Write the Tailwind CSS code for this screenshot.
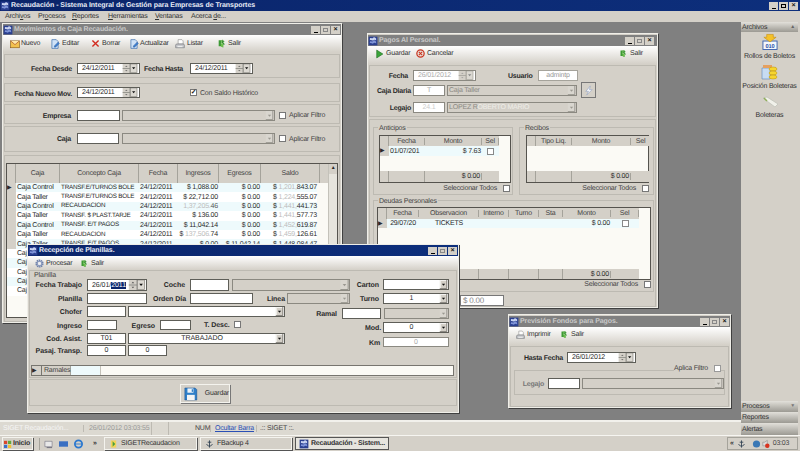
<!DOCTYPE html>
<html lang="es">
<head>
<meta charset="utf-8">
<title>Recaudación</title>
<script src="https://cdn.jsdelivr.net/npm/@tailwindcss/browser@4"></script>
</head>
<body class="w-[800px] h-[451px] overflow-hidden flex flex-col bg-[#d4d0c8] font-['Liberation_Sans',sans-serif] text-[7px] tracking-[-0.2px] leading-none text-[#2a2a2a] [text-rendering:geometricPrecision]">

<svg class="absolute w-0 h-0">
  <symbol id="dt" viewBox="0 0 18 11"><rect width="18" height="11" fill="#d4d0c8"/><path d="M0 5.500h9M9 0v11" stroke="#8a8a84" fill="none"/><path d="M3 3.500l1.500-1.500 1.500 1.500zM3 7.500l1.500 1.500 1.500-1.500z" fill="#555"/><rect x="9.500" y="0" width="8" height="10.500" fill="#dcd9d2" stroke="#77756f" stroke-width=".6"/><path d="M11.500 4h4l-2 2.500z" fill="#111"/></symbol>
  <symbol id="dt-off" viewBox="0 0 18 11"><rect width="18" height="11" fill="#d4d0c8"/><path d="M0 5.500h9M9 0v11" stroke="#a5a39d" fill="none"/><path d="M3 3.500l1.500-1.500 1.500 1.500zM3 7.500l1.500 1.500 1.500-1.500z" fill="#999"/><rect x="9.500" y="0" width="8" height="10.500" fill="#dcd9d2" stroke="#99978f" stroke-width=".6"/><path d="M11.500 4h4l-2 2.500z" fill="#888"/></symbol>
  <symbol id="dd" viewBox="0 0 9 11"><rect width="9" height="11" fill="#d4d0c8"/><path d="M.5 10.500V.5h8" stroke="#fff" fill="none"/><path d="M0 10.500h8.500V0" stroke="#77756f" fill="none"/><path d="M2.500 4.500h4l-2 2.500z" fill="#111"/></symbol>
  <symbol id="dd-off" viewBox="0 0 9 11"><rect width="9" height="11" fill="#d9d6cf"/><path d="M0 10.500h8.500V0" stroke="#8f8d86" fill="none"/><path d="M2.500 4.500h4l-2 2.500z" fill="#9a9890"/></symbol>
  <symbol id="salir" viewBox="0 0 16 16"><path d="M3 2h8v13l-4-2H3z" fill="#3d9a35"/><path d="M7 2h4v13l-4-2z" fill="#6cc04a"/><path d="M9 1l5 4-3 .5 3 4-2 1.500-3-4-1.500 2z" fill="#2f8a2b" stroke="#e8f5df" stroke-width=".5"/></symbol>
  <symbol id="nuevo" viewBox="0 0 16 16"><rect x="1" y="3" width="14" height="11" fill="#f2c14e" stroke="#8a5a12"/><path d="M1 3l7 6 7-6" fill="#ffe9a8" stroke="#a33a12"/></symbol>
  <symbol id="editar" viewBox="0 0 16 16"><path d="M3 1h7l3 3v11H3z" fill="#cfe2f7" stroke="#2c62a8"/><path d="M7 11l6-6 2 2-6 6H7z" fill="#3f7fd0" stroke="#1d4a8a" stroke-width=".6"/></symbol>
  <symbol id="borrar" viewBox="0 0 16 16"><path d="M2.500 2.500l11 11M13.500 2.500l-11 11" stroke="#d22a1e" stroke-width="2.400" fill="none"/></symbol>
  <symbol id="listar" viewBox="0 0 16 16"><path d="M5 1h6l2 2v5H5z" fill="#fff" stroke="#8c8c8c"/><path d="M2 8h12l1 2v4H1v-4z" fill="#c2c4c8" stroke="#77797d"/><rect x="4" y="11" width="8" height="2" fill="#eee"/></symbol>
  <symbol id="play" viewBox="0 0 16 16"><path d="M3 1l11 7-11 7z" fill="#3aa33a" stroke="#1d6c1d"/></symbol>
  <symbol id="cancel" viewBox="0 0 16 16"><circle cx="8" cy="8" r="6.500" fill="#e8e2dc" stroke="#c9341f" stroke-width="2.200"/><path d="M5 5l6 6M11 5l-6 6" stroke="#c9341f" stroke-width="1.800"/></symbol>
  <symbol id="gear" viewBox="0 0 16 16"><circle cx="8" cy="8" r="5.500" fill="none" stroke="#6d7fa8" stroke-width="3.500" stroke-dasharray="2.400 1"/><circle cx="8" cy="8" r="4" fill="none" stroke="#8b9bc0" stroke-width="2"/><circle cx="8" cy="8" r="2.400" fill="#eef0f6"/></symbol>
  <symbol id="disk" viewBox="0 0 16 16"><path d="M1 1h12l2 2v12H1z" fill="#2f7fc8" stroke="#1d4e8a" stroke-width=".6"/><rect x="4" y="1.500" width="7" height="5" fill="#eef4fa"/><rect x="3.500" y="9" width="9" height="6" fill="#f4f4f4"/><rect x="9" y="2.500" width="1.500" height="3" fill="#2f7fc8"/></symbol>
  <symbol id="win" viewBox="0 0 16 16"><rect x="1" y="1" width="14" height="14" fill="#2a3f8f"/><path d="M3 4c2-2 4 1 5-1s3-1 5 1v3c-2-2-3-1-5 0S5 5 3 7z" fill="#c9d4f2"/><path d="M3 9c2-2 4 1 5-1s3-1 5 1v3c-2-2-3-1-5 0s-3-2-5 0z" fill="#7f94d8"/></symbol>
</svg>

<!-- app title -->
<div class="h-[11px] flex items-center bg-linear-to-r from-[#0a246a] to-[#0d2f7c] text-[#e8ecf6] shrink-0">
  <svg class="w-[10px] h-[10px] shrink-0"><use href="#win"/></svg>
  <span class="ml-[1px] font-bold whitespace-nowrap tracking-[-0.03px]">Recaudación - Sistema Integral de Gestión para Empresas de Transportes</span>
  <div class="ml-auto mr-[2px] flex gap-[1px] text-[#111]">
    <span class="w-[9px] h-[8px] bg-[#d4d0c8] flex items-end justify-center pb-[1px]"><span class="w-[4px] h-[1px] bg-black"></span></span>
    <span class="w-[9px] h-[8px] bg-[#d4d0c8] flex items-center justify-center"><span class="w-[5px] h-[4px] border border-black"></span></span>
    <span class="w-[9px] h-[8px] bg-[#d4d0c8] flex items-center justify-center font-bold">×</span>
  </div>
</div>
<!-- menu -->
<div class="h-[11px] flex items-center bg-[#d4d0c8] shrink-0 relative text-[#333]">
  <span class="ml-[5px] w-[33px]">Archi<u>v</u>os</span><span class="w-[34px]">Pr<u>o</u>cesos</span><span class="w-[36px]"><u>R</u>eportes</span><span class="w-[47px]"><u>H</u>erramientas</span><span class="w-[36px]"><u>V</u>entanas</span><span>Acerca <u>d</u>e...</span>
</div>

<div class="flex h-[413px] shrink-0">
  <div class="w-[741px] flex flex-col">
    <!-- desktop -->
    <div class="relative h-[398px] bg-[#808080] overflow-hidden">

      <!-- Movimientos de Caja -->
      <section class="absolute left-[2px] top-[1px] w-[340px] h-[300px] bg-[#d4d0c8] border border-[#efeee8] shadow-[1px_1px_0_#404040] flex flex-col">
        <div class="h-[11px] bg-[#808080] flex items-center text-[#c9c9c9] font-bold shrink-0 tracking-[-0.1px]">
          <svg class="w-[10px] h-[10px] mr-[1px] shrink-0"><use href="#win"/></svg>Movimientos de Caja Recaudación.
          <div class="ml-auto mr-[1px] flex gap-[1px] text-[#111]">
            <span class="w-[9px] h-[8px] bg-[#d4d0c8] flex items-end justify-center pb-[1px]"><span class="w-[4px] h-[1px] bg-black"></span></span>
            <span class="w-[9px] h-[8px] bg-[#d4d0c8] flex items-center justify-center"><span class="w-[5px] h-[4px] border border-[#888]"></span></span>
            <span class="w-[9px] h-[8px] bg-[#d4d0c8] flex items-center justify-center font-bold">×</span>
          </div>
        </div>
        <div class="h-[17px] bg-linear-to-b from-white to-[#d4d0c8] flex items-center shrink-0 text-[#333] pl-[7px]">
          <svg class="w-[10px] h-[10px] mr-[1px]"><use href="#nuevo"/></svg><span class="w-[29px]">Nuevo</span>
          <svg class="w-[10px] h-[10px] mr-[2px]"><use href="#editar"/></svg><span class="w-[29px]">Editar</span>
          <svg class="w-[9px] h-[9px] mr-[2px]"><use href="#borrar"/></svg><span class="w-[27px]">Borrar</span>
          <svg class="w-[10px] h-[10px] mr-[1px]"><use href="#editar"/></svg><span class="w-[35px]">Actualizar</span>
          <svg class="w-[10px] h-[10px] mr-[2px]"><use href="#listar"/></svg><span class="w-[30px]">Listar</span>
          <svg class="w-[9px] h-[9px] mr-[2px]"><use href="#salir"/></svg><span>Salir</span>
        </div>
        <div class="mt-[2px] flex-1 flex flex-col px-[1px] min-h-0">
          <div class="h-[24px] shrink-0 border border-[#bdbab2] flex items-start pt-[8px]">
            <label class="w-[67px] text-right font-bold pt-[3px]">Fecha Desde</label>
            <div class="ml-[5px] w-[63px] h-[11px] bg-white border border-[#5e5e58] flex items-center pl-[4px]"><span class="flex-1">24/12/2011</span><svg class="w-[18px] h-full shrink-0" preserveAspectRatio="none"><use href="#dt"/></svg></div>
            <label class="ml-[4px] w-[41px] font-bold pt-[3px] whitespace-nowrap">Fecha Hasta</label>
            <div class="ml-[5px] w-[63px] h-[11px] bg-white border border-[#5e5e58] flex items-center pl-[4px]"><span class="flex-1">24/12/2011</span><svg class="w-[18px] h-full shrink-0" preserveAspectRatio="none"><use href="#dt"/></svg></div>
          </div>
          <div class="mt-[5px] h-[19px] shrink-0 border border-[#bdbab2] flex items-start pt-[3px]">
            <label class="w-[67px] text-right font-bold pt-[4px] whitespace-nowrap">Fecha Nuevo Mov.</label>
            <div class="ml-[5px] w-[63px] h-[11px] bg-white border border-[#5e5e58] flex items-center pl-[4px]"><span class="flex-1">24/12/2011</span><svg class="w-[18px] h-full shrink-0" preserveAspectRatio="none"><use href="#dt"/></svg></div>
            <span class="ml-[50px] w-[7px] h-[7px] bg-white border border-[#777] flex items-center justify-center font-bold mt-[2px]">✓</span>
            <span class="ml-[3px] pt-[3px] text-[#444]">Con Saldo Histórico</span>
          </div>
          <div class="mt-[2px] h-[20px] shrink-0 border border-[#bdbab2] flex items-start pt-[5px]">
            <label class="w-[67px] pr-[1px] text-right font-bold pt-[3px]">Empresa</label>
            <span class="ml-[5px] w-[43px] h-[11px] bg-white border border-[#5e5e58]"></span>
            <div class="ml-[2px] w-[153px] h-[11px] bg-[#d4d0c8] border border-[#8b8981] flex justify-end"><svg class="w-[9px] h-full"  preserveAspectRatio="none"><use href="#dd-off"/></svg></div>
            <span class="ml-[4px] mt-[2px] w-[7px] h-[7px] bg-white border border-[#777]"></span>
            <span class="ml-[3px] pt-[2px] text-[#444]">Aplicar Filtro</span>
          </div>
          <div class="mt-[2px] h-[26px] shrink-0 border border-[#bdbab2] flex items-start pt-[6px]">
            <label class="w-[67px] pr-[1px] text-right font-bold pt-[3px]">Caja</label>
            <span class="ml-[5px] w-[42px] h-[11px] bg-white border border-[#5e5e58]"></span>
            <div class="ml-[3px] w-[153px] h-[11px] bg-[#d4d0c8] border border-[#8b8981] flex justify-end"><svg class="w-[9px] h-full"  preserveAspectRatio="none"><use href="#dd-off"/></svg></div>
            <span class="ml-[4px] mt-[2px] w-[7px] h-[7px] bg-white border border-[#777]"></span>
            <span class="ml-[3px] pt-[3px] text-[#444]">Aplicar Filtro</span>
          </div>
          <!-- grid -->
          <div class="mt-[3px] flex-1 border border-[#bdbab2] px-[1px] pt-[7px] pb-[3px] min-h-0">
            <div class="h-full border border-[#55534e] bg-[#fbfaf5] relative flex flex-col overflow-hidden">
              <div class="h-[19px] shrink-0 grid grid-cols-[9px_44px_79px_39px_41px_42px_59px] bg-[#d4d0c8] text-center items-center text-[#444]">
                <span class="h-full border-r border-[#a5a39b]"></span><span class="h-full flex items-center justify-center border-r border-[#a5a39b]">Caja</span><span class="h-full flex items-center justify-center border-r border-[#a5a39b]">Concepto Caja</span><span class="h-full flex items-center justify-center border-r border-[#a5a39b]">Fecha</span><span class="h-full flex items-center justify-center border-r border-[#a5a39b]">Ingresos</span><span class="h-full flex items-center justify-center border-r border-[#a5a39b]">Egresos</span><span class="h-full flex items-center justify-center border-r border-[#a5a39b]">Saldo</span>
              </div>
              <div class="h-[9.400px] shrink-0 grid grid-cols-[9px_44px_79px_39px_41px_42px_56px] items-center bg-[#eefafc] w-fit whitespace-nowrap"><span class="h-full bg-[#d4d0c8] text-[6px] flex items-center">▶</span><span class="pl-[1px]">Caja Control</span><span class="pl-[1px] text-[6.300px]">TRANSF.E/TURNOS BOLE</span><span class="pl-[1px]">24/12/2011</span><span class="text-right pr-[1px]">$ 1,088.00</span><span class="text-right pr-[1px]">$ 0.00</span><span class="text-right">$ <span class="text-[#bbb]">1,201,</span>843.07</span></div>
              <div class="h-[9.400px] shrink-0 grid grid-cols-[9px_44px_79px_39px_41px_42px_56px] items-center bg-white w-fit whitespace-nowrap"><span class="h-full bg-[#d4d0c8]"></span><span class="pl-[1px]">Caja Taller</span><span class="pl-[1px] text-[6.300px]">TRANSF.E/TURNOS BOLE</span><span class="pl-[1px]">24/12/2011</span><span class="text-right pr-[1px]">$ 22,712.00</span><span class="text-right pr-[1px]">$ 0.00</span><span class="text-right">$ <span class="text-[#bbb]">1,224,</span>555.07</span></div>
              <div class="h-[9.400px] shrink-0 grid grid-cols-[9px_44px_79px_39px_41px_42px_56px] items-center bg-[#eefafc] w-fit whitespace-nowrap"><span class="h-full bg-[#d4d0c8]"></span><span class="pl-[1px]">Caja Control</span><span class="pl-[1px] text-[6.300px]">RECAUDACION</span><span class="pl-[1px]">24/12/2011</span><span class="text-right pr-[1px] text-[#bbb]">1,37,205.<span class="text-[#555]">46</span></span><span class="text-right pr-[1px]">$ 0.00</span><span class="text-right">$ <span class="text-[#bbb]">1,441,</span>441.73</span></div>
              <div class="h-[9.400px] shrink-0 grid grid-cols-[9px_44px_79px_39px_41px_42px_56px] items-center bg-white w-fit whitespace-nowrap"><span class="h-full bg-[#d4d0c8]"></span><span class="pl-[1px]">Caja Taller</span><span class="pl-[1px] text-[6.300px]">TRANSF. $ PLAST.TARJE</span><span class="pl-[1px]">24/12/2011</span><span class="text-right pr-[1px]">$ 136.00</span><span class="text-right pr-[1px]">$ 0.00</span><span class="text-right">$ <span class="text-[#bbb]">1,441,</span>577.73</span></div>
              <div class="h-[9.400px] shrink-0 grid grid-cols-[9px_44px_79px_39px_41px_42px_56px] items-center bg-[#eefafc] w-fit whitespace-nowrap"><span class="h-full bg-[#d4d0c8]"></span><span class="pl-[1px]">Caja Control</span><span class="pl-[1px] text-[6.300px]">TRANSF. E/T PAGOS</span><span class="pl-[1px]">24/12/2011</span><span class="text-right pr-[1px]">$ 11,042.14</span><span class="text-right pr-[1px]">$ 0.00</span><span class="text-right">$ <span class="text-[#bbb]">1,452,</span>619.87</span></div>
              <div class="h-[9.400px] shrink-0 grid grid-cols-[9px_44px_79px_39px_41px_42px_56px] items-center bg-white w-fit whitespace-nowrap"><span class="h-full bg-[#d4d0c8]"></span><span class="pl-[1px]">Caja Taller</span><span class="pl-[1px] text-[6.300px]">RECAUDACION</span><span class="pl-[1px]">24/12/2011</span><span class="text-right pr-[1px]">$ <span class="text-[#bbb]">137,506.</span>74</span><span class="text-right pr-[1px]">$ 0.00</span><span class="text-right">$ <span class="text-[#bbb]">1,459,</span>126.61</span></div>
              <div class="h-[9.400px] shrink-0 grid grid-cols-[9px_44px_79px_39px_41px_42px_56px] items-center bg-[#eefafc] w-fit whitespace-nowrap"><span class="h-full bg-[#d4d0c8]"></span><span class="pl-[1px]">Caja Taller</span><span class="pl-[1px] text-[6.300px]">TRANSF. E/T PAGOS</span><span class="pl-[1px]">24/12/2011</span><span class="text-right pr-[1px]">$ 0.00</span><span class="text-right pr-[1px]">$ 11,042.14</span><span class="text-right">$ 1,448,084.47</span></div>
              <div class="h-[9.400px] shrink-0 pl-[10px] bg-white flex items-center">Caja Taller</div>
              <div class="h-[9.400px] shrink-0 pl-[10px] bg-[#eefafc] flex items-center">Caja Taller</div>
              <div class="h-[9.400px] shrink-0 pl-[10px] bg-white flex items-center">Caja Taller</div>
              <div class="h-[9.400px] shrink-0 pl-[10px] bg-[#eefafc] flex items-center">Caja Taller</div>
              <div class="h-[9.400px] shrink-0 pl-[10px] bg-white flex items-center">Caja Taller</div>
              <div class="absolute right-0 top-0 bottom-0 w-[9px] bg-[#e6e4dd] border-l border-[#c4c2ba]"><span class="block h-[10px] bg-[#d4d0c8] text-center text-[5px] pt-[2px]">▲</span></div>
            </div>
          </div>
        </div>
      </section>

      <!-- Pagos Al Personal -->
      <section class="absolute left-[367px] top-[11px] w-[291px] h-[275px] bg-[#d4d0c8] border border-[#efeee8] shadow-[1px_1px_0_#404040] flex flex-col">
        <div class="h-[11px] mt-[1px] bg-[#808080] flex items-center text-[#c9c9c9] font-bold shrink-0 tracking-[-0.1px]">
          <svg class="w-[10px] h-[10px] mr-[1px] shrink-0"><use href="#win"/></svg>Pagos Al Personal.
          <div class="ml-auto mr-[3px] flex gap-[1px] text-[#111]">
            <span class="w-[9px] h-[8px] bg-[#d4d0c8] flex items-end justify-center pb-[1px]"><span class="w-[4px] h-[1px] bg-black"></span></span>
            <span class="w-[9px] h-[8px] bg-[#d4d0c8] flex items-center justify-center"><span class="w-[5px] h-[4px] border border-[#888]"></span></span>
            <span class="w-[9px] h-[8px] bg-[#d4d0c8] flex items-center justify-center font-bold">×</span>
          </div>
        </div>
        <div class="h-[18px] pb-[3px] bg-linear-to-b from-white to-[#d4d0c8] flex items-center shrink-0 text-[#333] pl-[7px]">
          <svg class="w-[9px] h-[10px] mr-[2px]"><use href="#play"/></svg><span class="w-[30px]">Guardar</span>
          <svg class="w-[9px] h-[9px] mr-[2px]"><use href="#cancel"/></svg><span>Cancelar</span>
          <svg class="w-[8px] h-[9px] ml-auto mr-[3px]"><use href="#salir"/></svg><span class="mr-[14px]">Salir</span>
        </div>
        <div class="mt-[1px] mx-[1px] h-[52px] shrink-0 border border-[#bdbab2] flex flex-col">
          <div class="flex items-start h-[16px] pt-[4px]">
            <label class="w-[38px] text-right font-bold pt-[3px]">Fecha</label>
            <div class="ml-[5px] w-[63px] h-[11px] bg-white border border-[#8b8981] text-[#aaa] flex items-center pl-[4px]"><span class="flex-1">26/01/2012</span><svg class="w-[18px] h-full shrink-0" preserveAspectRatio="none"><use href="#dt-off"/></svg></div>
            <label class="ml-[32px] font-bold pt-[3px] w-[26px]">Usuario</label>
            <span class="ml-[4px] w-[40px] h-[11px] bg-white border border-[#a5a39b] text-[#999] flex items-center justify-center">admintp</span>
          </div>
          <div class="flex items-start h-[17px] pt-[3px]">
            <label class="w-[41px] text-right font-bold pt-[3px] whitespace-nowrap">Caja Diaria</label>
            <span class="ml-[2px] w-[32px] h-[11px] bg-white border border-[#8b8981] text-[#aaa] flex items-center justify-center">T</span>
            <div class="ml-[2px] w-[130px] h-[11px] bg-[#d4d0c8] border border-[#8b8981] text-[#8c8a84] flex items-center pl-[1px]"><span class="flex-1">Caja Taller</span><svg class="w-[9px] h-full" preserveAspectRatio="none"><use href="#dd-off"/></svg></div>
            <span class="ml-[4px] -mt-[3px] w-[15px] h-[16px] bg-[#d4d0c8] border border-[#777] flex items-center justify-center"><svg viewBox="0 0 12 12" class="w-[11px] h-[11px]"><path d="M8 1L3 7h3l-2 4 6-6H7z" fill="#f4f6fa" stroke="#9aa8c4" stroke-width=".7"/></svg></span>
          </div>
          <div class="flex items-start h-[16px] pt-[3px]">
            <label class="w-[41px] text-right font-bold pt-[3px]">Legajo</label>
            <span class="ml-[2px] w-[32px] h-[11px] bg-white border border-[#8b8981] text-[#ccc] flex items-center justify-center">24.1</span>
            <div class="ml-[2px] w-[130px] h-[11px] bg-[#d4d0c8] border border-[#8b8981] text-[#8c8a84] flex items-center pl-[1px]"><span class="flex-1">LOPEZ R<span class="text-[#efeee8]">OBERTO MARIO</span></span><svg class="w-[9px] h-full" preserveAspectRatio="none"><use href="#dd-off"/></svg></div>
          </div>
        </div>
        <div class="mt-[2px] flex-1 mx-[1px] border border-[#bdbab2] flex flex-col pl-[3px] pr-[1px] min-h-0">
          <div class="mt-[7px] flex gap-[6px] h-[68px] shrink-0">
            <div class="relative w-[140px] border border-[#bdbab2] pt-[7px] pl-[5px] pr-[1px]">
              <span class="absolute -top-[3px] left-[4px] bg-[#d4d0c8] px-[1px] text-[#444]">Anticipos</span>
              <div class="h-[48px] border border-[#55534e] bg-[#fbfaf5] flex flex-col">
                <div class="h-[10px] shrink-0 grid grid-cols-[9px_36px_57px_17px] bg-[#d4d0c8] text-center items-center w-fit text-[#444]"><span class="h-full border-r border-[#a5a39b]"></span><span class="border-r border-[#a5a39b]">Fecha</span><span class="border-r border-[#a5a39b]">Monto</span><span class="border-r border-[#a5a39b]">Sel</span></div>
                <div class="h-[10px] shrink-0 grid grid-cols-[9px_36px_57px_17px] bg-[#eefafc] w-fit items-center"><span class="h-full bg-[#d4d0c8] text-[6px] flex items-center">▶</span><span class="pl-[1px] whitespace-nowrap">01/07/201</span><span class="text-right pr-[1px]">$ 7.63</span><span class="flex justify-center"><span class="w-[7px] h-[7px] bg-white border border-[#888]"></span></span></div>
                <div class="mt-auto h-[11px] grid grid-cols-[9px_36px_57px_17px] bg-[#d4d0c8] w-fit items-center"><span class="h-full border-r border-[#a5a39b]"></span><span class="h-full border-r border-[#a5a39b]"></span><span class="text-right pr-[1px] border-r border-[#a5a39b]">$ 0.00</span><span></span></div>
              </div>
              <div class="mt-[2px] flex justify-end items-center text-[#444]"><span>Seleccionar Todos</span><span class="ml-[6px] mr-[1px] w-[7px] h-[7px] bg-white border border-[#777]"></span></div>
            </div>
            <div class="relative w-[135px] border border-[#bdbab2] pt-[7px] pl-[6px] pr-[4px]">
              <span class="absolute -top-[3px] left-[4px] bg-[#d4d0c8] px-[1px] text-[#444]">Recibos</span>
              <div class="h-[48px] border border-[#55534e] bg-[#fbfaf5] flex flex-col">
                <div class="h-[10px] shrink-0 grid grid-cols-[9px_36px_59px_19px] bg-[#d4d0c8] text-center items-center w-fit text-[#444]"><span class="h-full border-r border-[#a5a39b]"></span><span class="border-r border-[#a5a39b]">Tipo Liq.</span><span class="border-r border-[#a5a39b]">Monto</span><span>Sel</span></div>
                <div class="mt-auto h-[11px] grid grid-cols-[9px_36px_59px_19px] bg-[#d4d0c8] w-fit items-center"><span class="h-full border-r border-[#a5a39b]"></span><span class="h-full border-r border-[#a5a39b]"></span><span class="text-right pr-[1px] border-r border-[#a5a39b]">$ 0.00</span><span></span></div>
              </div>
              <div class="mt-[2px] flex justify-end items-center text-[#444]"><span>Seleccionar Todos</span><span class="ml-[6px] w-[7px] h-[7px] bg-white border border-[#777]"></span></div>
            </div>
          </div>
          <div class="mt-[5px] relative h-[92px] shrink-0 border border-[#bdbab2] pt-[6px] pl-[3px] pr-[2px]">
            <span class="absolute -top-[3px] left-[4px] bg-[#d4d0c8] px-[1px] text-[#444]">Deudas Personales</span>
            <div class="h-[73px] border border-[#55534e] bg-[#fbfaf5] flex flex-col">
              <div class="h-[11px] shrink-0 grid grid-cols-[9px_32px_60px_30px_30px_24px_48px_28px] bg-[#d4d0c8] text-center items-center w-fit text-[#444]"><span class="h-full border-r border-[#a5a39b]"></span><span class="border-r border-[#a5a39b]">Fecha</span><span class="border-r border-[#a5a39b]">Observacion</span><span class="border-r border-[#a5a39b]">Interno</span><span class="border-r border-[#a5a39b]">Turno</span><span class="border-r border-[#a5a39b]">Sta</span><span class="border-r border-[#a5a39b]">Monto</span><span class="border-r border-[#a5a39b]">Sel</span></div>
              <div class="h-[9px] shrink-0 grid grid-cols-[9px_32px_60px_30px_30px_24px_48px_28px] bg-[#eefafc] items-center w-fit text-center"><span class="h-full bg-[#d4d0c8] text-[6px] flex items-center">▶</span><span>29/07/20</span><span>TICKETS</span><span></span><span></span><span></span><span class="text-right pr-[1px]">$ 0.00</span><span class="flex justify-center"><span class="w-[7px] h-[7px] bg-white border border-[#888]"></span></span></div>
              <div class="mt-auto h-[10px] grid grid-cols-[9px_32px_60px_30px_30px_24px_48px_28px] bg-[#d4d0c8] items-center w-fit"><span class="h-full border-r border-[#a5a39b]"></span><span class="h-full border-r border-[#a5a39b]"></span><span class="h-full border-r border-[#a5a39b]"></span><span class="h-full border-r border-[#a5a39b]"></span><span class="h-full border-r border-[#a5a39b]"></span><span class="h-full border-r border-[#a5a39b]"></span><span class="text-right pr-[1px] border-r border-[#a5a39b]">$ 0.00</span><span></span></div>
            </div>
            <div class="mt-[1px] flex justify-end items-center text-[#444]"><span>Seleccionar Todos</span><span class="ml-[6px] w-[7px] h-[7px] bg-white border border-[#777]"></span></div>
          </div>
          <span class="mt-[3px] ml-[87px] w-[44px] h-[11px] bg-white border border-[#777] flex items-center pl-[2px] text-[#888] text-[8px] shrink-0">$ 0.00</span>
        </div>
      </section>

      <!-- Prevision Fondos -->
      <section class="absolute left-[508px] top-[292px] w-[223px] h-[94px] bg-[#d4d0c8] border border-[#efeee8] shadow-[1px_1px_0_#404040] flex flex-col">
        <div class="h-[11px] mt-[1px] bg-[#808080] flex items-center text-[#c9c9c9] font-bold shrink-0 tracking-[-0.1px]">
          <svg class="w-[10px] h-[10px] mr-[1px] shrink-0"><use href="#win"/></svg>Previsión Fondos para Pagos.
          <div class="ml-auto mr-[1px] flex gap-[1px] text-[#111]">
            <span class="w-[9px] h-[8px] bg-[#d4d0c8] flex items-end justify-center pb-[1px]"><span class="w-[4px] h-[1px] bg-black"></span></span>
            <span class="w-[9px] h-[8px] bg-[#d4d0c8] flex items-center justify-center"><span class="w-[5px] h-[4px] border border-[#888]"></span></span>
            <span class="w-[9px] h-[8px] bg-[#d4d0c8] flex items-center justify-center font-bold">×</span>
          </div>
        </div>
        <div class="h-[18px] pb-[3px] bg-linear-to-b from-white to-[#d4d0c8] flex items-center shrink-0 text-[#333] pl-[7px]">
          <svg class="w-[9px] h-[10px] mr-[2px]"><use href="#listar"/></svg><span class="w-[33px]">Imprimir</span>
          <svg class="w-[8px] h-[9px] mr-[3px]"><use href="#salir"/></svg><span>Salir</span>
        </div>
        <div class="mt-[1px] mx-[1px] flex-1 border border-[#bdbab2] flex flex-col">
          <div class="mt-[5px] flex items-start">
            <label class="w-[52px] text-right font-bold pt-[3px] whitespace-nowrap">Hasta Fecha</label>
            <div class="ml-[4px] w-[69px] h-[11px] bg-white border border-[#5e5e58] flex items-center pl-[4px]"><span class="flex-1">26/01/2012</span><svg class="w-[18px] h-full shrink-0" preserveAspectRatio="none"><use href="#dt"/></svg></div>
          </div>
          <div class="relative mt-[7px] mx-[3px] h-[25px] border border-[#bdbab2] flex items-start pt-[7px]">
            <div class="absolute -top-[6px] right-[3px] bg-[#d4d0c8] flex items-center text-[#444]"><span>Aplica Filtro</span><span class="ml-[6px] w-[7px] h-[7px] bg-white border border-[#999]"></span></div>
            <label class="w-[29px] text-right font-bold text-[#777] pt-[3px]">Legajo</label>
            <span class="ml-[4px] w-[32px] h-[11px] bg-white border border-[#5e5e58]"></span>
            <div class="ml-[2px] w-[142px] h-[11px] bg-[#d4d0c8] border border-[#8b8981] flex justify-end"><svg class="w-[9px] h-full" preserveAspectRatio="none"><use href="#dd-off"/></svg></div>
          </div>
        </div>
      </section>

      <!-- Recepcion de Planillas -->
      <section class="absolute left-[27px] top-[222px] w-[432px] h-[169px] bg-[#d4d0c8] border border-[#efeee8] shadow-[1px_1px_0_#404040] flex flex-col">
        <div class="h-[11px] bg-linear-to-r from-[#0a246a] to-[#0d2f7c] flex items-center text-[#e8ecf6] font-bold shrink-0 tracking-[-0.1px]">
          <svg class="w-[10px] h-[10px] mr-[1px] shrink-0"><use href="#win"/></svg>Recepción de Planillas.
          <div class="ml-auto mr-[1px] flex gap-[1px] text-[#111]">
            <span class="w-[9px] h-[8px] bg-[#d4d0c8] flex items-end justify-center pb-[1px]"><span class="w-[4px] h-[1px] bg-black"></span></span>
            <span class="w-[9px] h-[8px] bg-[#d4d0c8] flex items-center justify-center"><span class="w-[5px] h-[4px] border border-[#888]"></span></span>
            <span class="w-[9px] h-[8px] bg-[#d4d0c8] flex items-center justify-center font-bold">×</span>
          </div>
        </div>
        <div class="h-[14px] bg-linear-to-b from-white to-[#d4d0c8] flex items-center shrink-0 text-[#333] pl-[7px]">
          <svg class="w-[9px] h-[9px] mr-[2px]"><use href="#gear"/></svg><span class="w-[34px]">Procesar</span>
          <svg class="w-[8px] h-[9px] mr-[3px]"><use href="#salir"/></svg><span>Salir</span>
        </div>
        <div class="h-[108px] mx-[1px] shrink-0 border border-[#bdbab2] flex flex-col relative tracking-[-0.05px]">
          <span class="absolute top-[1px] left-[4px] text-[#444]">Planilla</span>
          <div class="mt-[8px] h-[14px] flex items-start shrink-0">
            <label class="w-[52px] text-right font-bold pt-[3px] whitespace-nowrap">Fecha Trabajo</label>
            <div class="ml-[5px] w-[60px] h-[12px] bg-white border border-[#5e5e58] flex items-center pl-[4px]"><span class="flex-1">26/01/<span class="bg-[#0a246a] text-white">2011</span></span><svg class="w-[18px] h-full shrink-0" preserveAspectRatio="none"><use href="#dt"/></svg></div>
            <label class="w-[38px] text-right font-bold pt-[3px]">Coche</label>
            <span class="ml-[5px] w-[39px] h-[12px] bg-white border border-[#5e5e58]"></span>
            <div class="ml-[3px] w-[118px] h-[12px] bg-[#d4d0c8] border border-[#8b8981] flex justify-end"><svg class="w-[9px] h-full" preserveAspectRatio="none"><use href="#dd-off"/></svg></div>
            <label class="w-[29px] text-right font-bold pt-[3px]">Carton</label>
            <div class="ml-[4px] w-[66px] h-[11px] bg-white border border-[#5e5e58] flex justify-end"><svg class="w-[9px] h-full" preserveAspectRatio="none"><use href="#dd"/></svg></div>
          </div>
          <div class="h-[13px] flex items-start shrink-0">
            <label class="w-[52px] text-right font-bold pt-[3px]">Planilla</label>
            <span class="ml-[5px] w-[60px] h-[11px] bg-white border border-[#5e5e58]"></span>
            <label class="w-[39px] text-right font-bold pt-[3px] whitespace-nowrap">Orden Día</label>
            <span class="ml-[4px] w-[63px] h-[11px] bg-white border border-[#5e5e58]"></span>
            <label class="w-[32px] text-right font-bold pt-[3px]">Linea</label>
            <div class="ml-[2px] w-[63px] h-[11px] bg-[#d4d0c8] border border-[#8b8981] flex justify-end"><svg class="w-[9px] h-full" preserveAspectRatio="none"><use href="#dd-off"/></svg></div>
            <label class="w-[29px] text-right font-bold pt-[3px]">Turno</label>
            <div class="ml-[4px] w-[66px] h-[11px] bg-white border border-[#5e5e58] flex items-center"><span class="flex-1 text-center">1</span><svg class="w-[9px] h-full" preserveAspectRatio="none"><use href="#dd"/></svg></div>
          </div>
          <div class="h-[14px] flex items-start shrink-0">
            <label class="w-[52px] text-right font-bold pt-[3px]">Chofer</label>
            <span class="ml-[5px] w-[39px] h-[11px] bg-white border border-[#5e5e58]"></span>
            <div class="ml-[2px] w-[157px] h-[11px] bg-white border border-[#5e5e58] flex justify-end"><svg class="w-[9px] h-full" preserveAspectRatio="none"><use href="#dd"/></svg></div>
            <label class="mt-[2px] w-[52px] text-right font-bold pt-[3px]">Ramal</label>
            <span class="mt-[2px] ml-[5px] w-[39px] h-[11px] bg-white border border-[#5e5e58]"></span>
            <div class="mt-[2px] ml-[3px] w-[65px] h-[11px] bg-[#d4d0c8] border border-[#8b8981] flex justify-end"><svg class="w-[9px] h-full" preserveAspectRatio="none"><use href="#dd-off"/></svg></div>
          </div>
          <div class="h-[13px] flex items-start shrink-0">
            <label class="w-[52px] text-right font-bold pt-[3px]">Ingreso</label>
            <span class="ml-[5px] w-[30px] h-[10px] bg-white border border-[#5e5e58]"></span>
            <label class="w-[38px] text-right font-bold pt-[3px]">Egreso</label>
            <span class="ml-[5px] w-[31px] h-[10px] bg-white border border-[#5e5e58]"></span>
            <label class="ml-[13px] w-[25px] font-bold pt-[2px] whitespace-nowrap">T. Desc.</label>
            <span class="ml-[5px] mt-[1px] w-[7px] h-[7px] bg-white border border-[#777]"></span>
            <label class="ml-[124px] mt-[2px] w-[14px] text-right font-bold pt-[3px]">Mod.</label>
            <div class="mt-[2px] ml-[4px] w-[66px] h-[11px] bg-white border border-[#5e5e58] flex items-center"><span class="flex-1 text-center">0</span><svg class="w-[9px] h-full" preserveAspectRatio="none"><use href="#dd"/></svg></div>
          </div>
          <div class="h-[12px] flex items-start shrink-0">
            <label class="w-[52px] text-right font-bold pt-[3px]">Cod. Asist.</label>
            <span class="ml-[5px] w-[39px] h-[11px] bg-white border border-[#5e5e58] flex items-center justify-center">T01</span>
            <div class="ml-[2px] w-[157px] h-[11px] bg-white border border-[#5e5e58] flex items-center"><span class="flex-1 text-center">TRABAJADO</span><svg class="w-[9px] h-full" preserveAspectRatio="none"><use href="#dd"/></svg></div>
            <label class="ml-[84px] mt-[4px] w-[10px] text-right font-bold pt-[3px]">Km</label>
            <span class="mt-[4px] ml-[4px] w-[66px] h-[10px] bg-white border border-[#8b8981] flex items-center justify-center text-[#aaa]">0</span>
          </div>
          <div class="h-[12px] flex items-start shrink-0">
            <label class="w-[52px] text-right font-bold pt-[3px] whitespace-nowrap">Pasaj. Transp.</label>
            <span class="ml-[5px] w-[39px] h-[11px] bg-white border border-[#5e5e58] flex items-center justify-center">0</span>
            <span class="ml-[2px] w-[39px] h-[11px] bg-white border border-[#5e5e58] flex items-center justify-center">0</span>
          </div>
          <div class="mt-[8px] ml-[1px] w-[423px] h-[11px] bg-[#fbfaf5] border border-[#77756f] flex items-stretch">
            <span class="w-[10px] bg-[#d4d0c8] border-r border-[#77756f] text-[6px] flex items-center">▶</span>
            <span class="w-[29px] bg-[#d4d0c8] border-r border-[#a5a39b] flex items-center pl-[2px] text-[#444] tracking-[-0.2px]">Ramales</span>
            <span class="w-[30px] bg-[#eefafc] border-r border-[#c4c2ba]"></span>
          </div>
        </div>
        <div class="mt-[1px] mx-[1px] h-[27px] shrink-0 border border-[#bdbab2] flex">
          <div class="mt-[4px] ml-[150px] w-[50px] h-[19px] bg-[#d4d0c8] border border-[#f4f3ee] shadow-[1px_1px_0_#777] flex items-center pl-[3px] text-[#333]">
            <svg class="w-[14px] h-[14px] mr-[7px]"><use href="#disk"/></svg>Guardar
          </div>
        </div>
      </section>
    </div>
    <!-- status bar -->
    <div class="h-[15px] bg-[#dcd9d1] border-t-2 border-[#f2f1ec] flex items-center text-[#444] whitespace-nowrap">
      <span class="w-[83px] pl-[3px] text-[#f5f5f5]">SIGET Recaudación...</span>
      <span class="w-[68px] pl-[5px] border-l border-[#bdbab2] text-[#999]">26/01/2012 03:03:55</span>
      <span class="w-[17px] h-full border-l border-[#bdbab2]"></span>
      <span class="w-[23px] h-full border-l border-[#bdbab2]"></span>
      <span class="w-[19px] pl-[4px]">NUM</span>
      <span class="border-l border-[#bdbab2] pl-[4px] text-[#2a4fb5] underline">Ocultar Barra</span>
      <span class="ml-[2px] border-l border-[#bdbab2] pl-[3px]">.:: SIGET ::.</span>
    </div>
  </div>

  <!-- right panel -->
  <aside class="w-[59px] bg-[#d4d0c8] flex flex-col text-[#333] pr-[2px] text-center">
    <div class="h-[10px] shrink-0 bg-linear-to-b from-[#e2e0da] to-[#9c9a93] flex items-center justify-between pl-[1px] pr-[3px]"><span>Archivos</span><span class="text-[5px] text-[#666]">▲</span></div>
    <svg viewBox="0 0 17 17" class="w-[16px] h-[17px] mx-auto mt-[1px]"><rect x="1" y="8" width="15" height="9" fill="#f4f7fc" stroke="#3c62ad"/><path d="M5 1h7v3h3l-6.500 5L2 4h3z" fill="#f5c22a" stroke="#c58b0a" stroke-width=".6"/><text x="8.500" y="15.500" text-anchor="middle" font-size="6" font-weight="bold" fill="#2a4fa5">010</text></svg>
    <span class="mt-[3px] whitespace-nowrap">Rollos de Boletos</span>
    <svg viewBox="0 0 18 16" class="w-[18px] h-[16px] mx-auto mt-[4px]"><path d="M1 4h8v11H1z" fill="#c7dcf2" stroke="#5a83b5" stroke-width=".6"/><path d="M2 1h9v3H2z" fill="#e5a05f"/><ellipse cx="12" cy="5" rx="4" ry="2" fill="#f6d52e" stroke="#b98d0a" stroke-width=".5"/><ellipse cx="12" cy="9" rx="4" ry="2" fill="#f6d52e" stroke="#b98d0a" stroke-width=".5"/><ellipse cx="12" cy="13" rx="4" ry="2" fill="#f6d52e" stroke="#b98d0a" stroke-width=".5"/></svg>
    <span class="mt-[3px] whitespace-nowrap">Posición Boleteras</span>
    <svg viewBox="0 0 18 12" class="w-[18px] h-[12px] mx-auto mt-[6px]"><path d="M2 2l4-1 11 7-3 3z" fill="#f1f1ea" stroke="#b7bbb0" stroke-width=".6"/><path d="M3 2l3 3" stroke="#8fae5a" stroke-width="1.500"/></svg>
    <span class="mt-[4px]">Boleteras</span>
    <div class="mt-auto h-[11px] bg-linear-to-b from-[#e2e0da] to-[#9c9a93] flex items-center justify-between pl-[1px] pr-[3px]"><span>Procesos</span><span class="text-[5px] text-[#777]">▼</span></div>
    <div class="h-[11px] bg-linear-to-b from-[#e2e0da] to-[#9c9a93] flex items-center pl-[1px]">Reportes</div>
    <div class="h-[12px] bg-linear-to-b from-[#e2e0da] to-[#9c9a93] flex items-center pl-[1px]">Alertas</div>
  </aside>
</div>

<!-- taskbar -->
<div class="h-[16px] shrink-0 bg-[#d4d0c8] border-t border-[#f6f5f1] flex items-center text-[#333] whitespace-nowrap">
  <div class="ml-[2px] w-[31px] h-[13px] bg-[#d4d0c8] border border-[#f4f3ee] shadow-[1px_1px_0_#555] flex items-center pl-[1px] font-bold">
    <svg viewBox="0 0 10 10" class="w-[8px] h-[8px] mr-[1px]"><path d="M0 1h4v4H0z" fill="#d9472b"/><path d="M5 1h4v4H5z" fill="#5fa83a"/><path d="M0 6h4v4H0z" fill="#3b6fc9"/><path d="M5 6h4v4H5z" fill="#f2c233"/></svg>Inicio
  </div>
  <span class="ml-[6px] w-[1px] h-[12px] bg-[#a5a39b]"></span>
  <svg viewBox="0 0 10 10" class="ml-[4px] w-[9px] h-[10px]"><path d="M1 2h8v6H1z" fill="#e8e8e8" stroke="#667" stroke-width=".6"/><path d="M3 9h6" stroke="#667"/></svg>
  <svg viewBox="0 0 10 10" class="ml-[6px] w-[9px] h-[10px]"><rect x="0" y="2" width="10" height="6" fill="#3a6fc2"/></svg>
  <svg viewBox="0 0 10 10" class="ml-[6px] w-[9px] h-[10px]"><circle cx="5" cy="5" r="4" fill="none" stroke="#2b78d0" stroke-width="2"/><path d="M1 5h8" stroke="#2b78d0"/></svg>
  <span class="ml-[10px] w-[11px] font-bold">»</span>
  <div class="w-[93px] h-[13px] border border-[#f4f3ee] shadow-[1px_1px_0_#555] flex items-center pl-[4px]"><svg viewBox="0 0 10 10" class="w-[9px] h-[10px] mr-[3px]"><path d="M2 1h6v8H2z" fill="#f2d35a"/><path d="M4 2l3 3-3 3z" fill="#4aa03a"/></svg>SIGETRecaudacion</div>
  <div class="ml-[3px] w-[92px] h-[13px] border border-[#f4f3ee] shadow-[1px_1px_0_#555] flex items-center pl-[4px]"><svg viewBox="0 0 10 10" class="w-[9px] h-[10px] mr-[3px]"><path d="M5 1v8M2 5c0 3 6 3 6 0M3 3h4" stroke="#345" fill="none"/></svg>FBackup 4</div>
  <div class="ml-[3px] w-[94px] h-[13px] bg-[#e6e4de] border border-[#555] flex items-center pl-[3px] font-bold"><svg class="w-[10px] h-[10px] mr-[2px] shrink-0"><use href="#win"/></svg>Recaudación - Sistem...</div>
  <div class="ml-auto mr-[2px] w-[71px] h-[13px] border border-[#a5a39b] flex items-center pl-[2px]">
    <span class="font-bold mr-[3px]">«</span>
    <svg viewBox="0 0 10 10" class="w-[9px] h-[10px] mr-[6px]"><path d="M5 1v8M2 5c0 3 6 3 6 0M3 3h4" stroke="#345" fill="none"/></svg>
    <svg viewBox="0 0 10 10" class="w-[9px] h-[10px]"><circle cx="5" cy="5" r="4" fill="#3a78b5"/></svg>
    <svg viewBox="0 0 10 10" class="w-[9px] h-[10px] mr-[3px]"><path d="M2 3h2l3-2v8L4 7H2z" fill="#ddd" stroke="#777" stroke-width=".5"/><circle cx="7" cy="7" r="2.500" fill="#d8331f"/></svg>
    <span class="text-[#444]">03:03</span>
  </div>
</div>
</body>
</html>
